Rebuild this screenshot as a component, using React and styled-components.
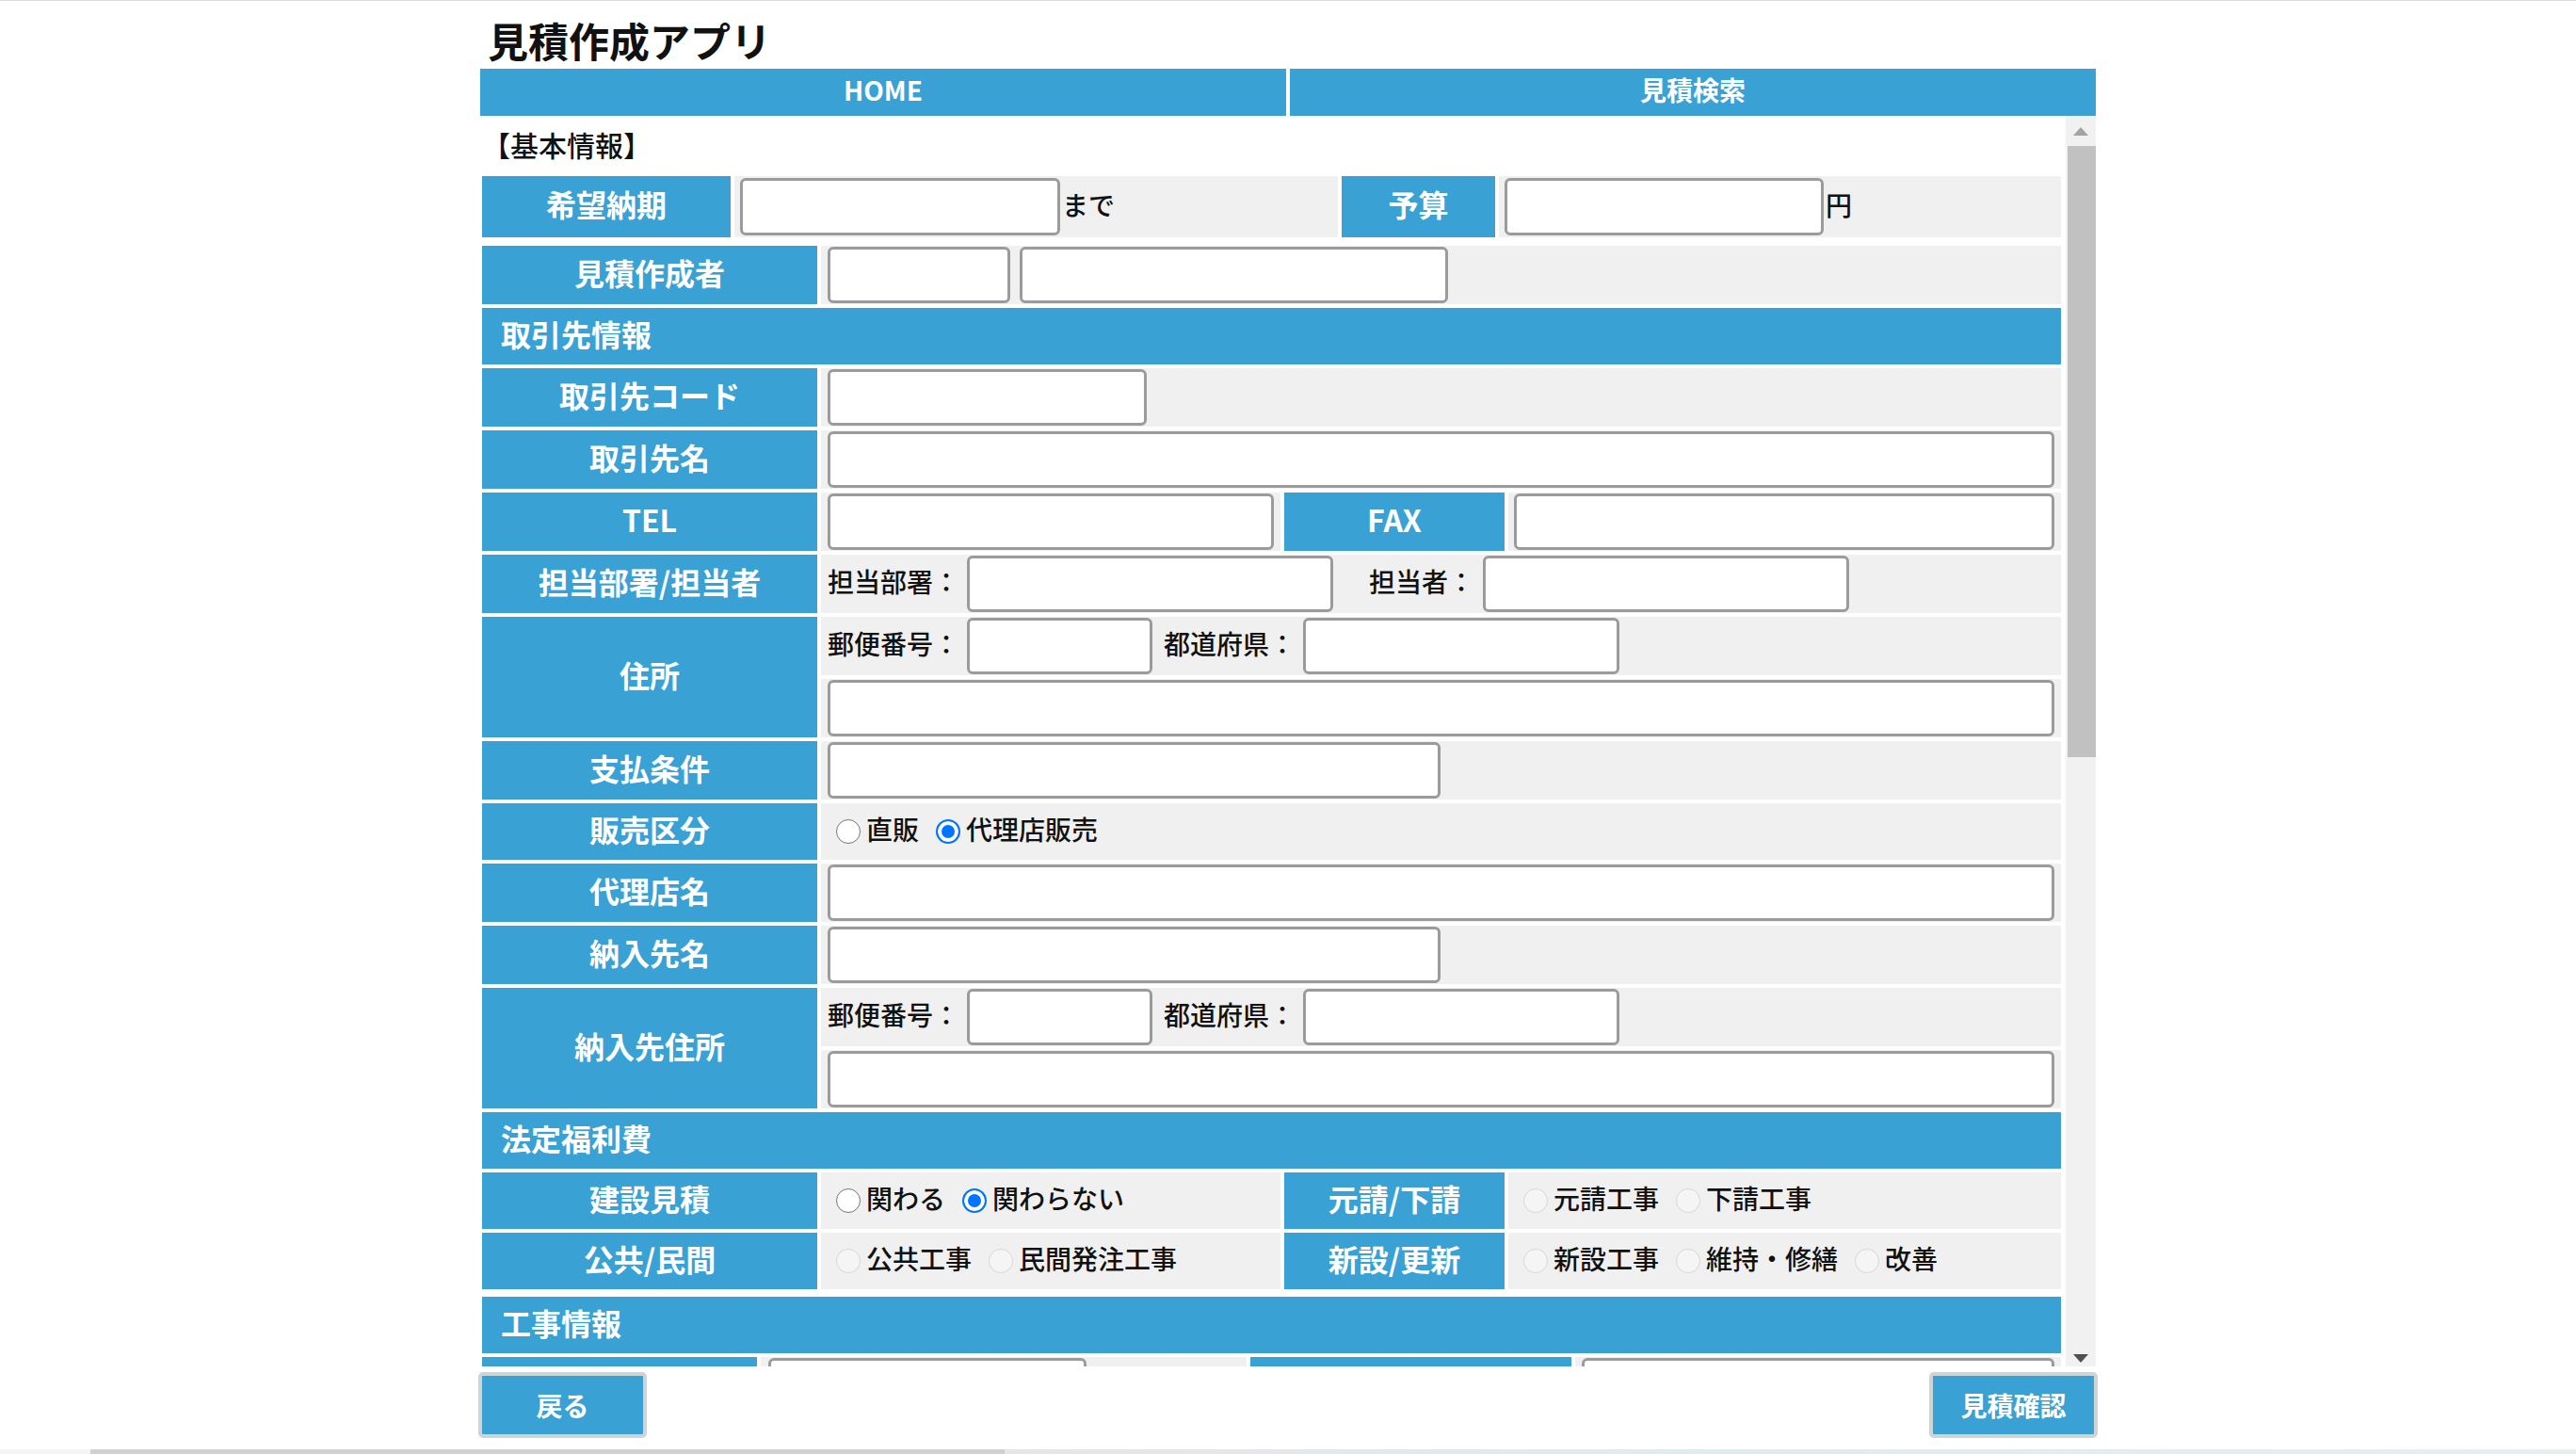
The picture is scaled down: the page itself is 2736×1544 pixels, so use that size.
import React from 'react';
import styled, { createGlobalStyle } from 'styled-components';

const BLUE = '#39a1d4';
const CELL = '#f0f0f0';

const GlobalStyle = createGlobalStyle`
  html, body { margin: 0; padding: 0; background: #fff; }
  body { font-family: "Noto Sans CJK JP", "Noto Sans", sans-serif; color: #111; }
  *, *::before, *::after { box-sizing: border-box; }
`;

const Page = styled.div`
  min-height: 1544px;
  border-top: 1px solid #dcdcdc;
  display: flex;
  flex-direction: column;
`;

const Main = styled.div`
  width: 1716px;
  margin: 0 auto;
  display: flex;
  flex-direction: column;
`;

const AppTitle = styled.h1`
  margin: 0;
  padding: 16px 0 6px 8px;
  font-size: 43px;
  line-height: 50px;
  font-weight: 700;
  color: #111;
`;

const Nav = styled.nav`
  display: grid;
  grid-template-columns: 1fr 1fr;
  gap: 4px;
  height: 50px;
`;

const NavButton = styled.a`
  background: ${BLUE};
  color: #fff;
  font-size: 28px;
  font-weight: 700;
  display: flex;
  align-items: center;
  justify-content: center;
  padding-bottom: 7px;
  text-decoration: none;
`;

const Viewport = styled.div`
  display: flex;
  height: 1328px;
`;

const ScrollContent = styled.div`
  flex: 1 1 0;
  min-width: 0;
  overflow: hidden;
  padding: 0 5px 0 2px;
`;

const ScrollBar = styled.div`
  flex: 0 0 32px;
  background: #f1f1f1;
  display: flex;
  flex-direction: column;
`;

const ScrollButton = styled.div`
  height: 32px;
  display: flex;
  justify-content: center;
  align-items: ${(p) => (p.$end ? 'flex-end' : 'center')};
  padding-bottom: ${(p) => (p.$end ? 4 : 0)}px;
  margin-top: ${(p) => (p.$end ? 'auto' : 0)};
`;

const ScrollThumb = styled.div`
  height: 649px;
  margin-left: 2px;
  background: #c1c1c1;
`;

const Caption = styled.div`
  height: 64px;
  font-size: 30px;
  line-height: 60px;
  font-weight: 500;
`;

const Table = styled.div`
  display: flex;
  flex-direction: column;
  gap: 4px;
  margin-top: ${(p) => p.$mt || 0}px;
`;

const Row = styled.div`
  display: flex;
  gap: 4px;
  height: ${(p) => p.$h || 62}px;
`;

const Label = styled.div`
  flex: 0 0 ${(p) => p.$w}px;
  background: ${BLUE};
  color: #fff;
  font-size: 32px;
  font-weight: 700;
  display: flex;
  align-items: center;
  justify-content: center;
  padding-bottom: 7px;
  white-space: nowrap;
`;

const Cell = styled.div`
  flex: ${(p) => (p.$w ? `0 0 ${p.$w}px` : '1 1 0')};
  min-width: 0;
  background: ${CELL};
  display: flex;
  align-items: center;
  padding: 0 ${(p) => p.$pr ?? 7}px 0 ${(p) => p.$pl ?? 7}px;
`;

const Stack = styled.div`
  flex: 1 1 0;
  display: flex;
  flex-direction: column;
  gap: 4px;
`;

const SectionHead = styled.div`
  height: 60px;
  background: ${BLUE};
  color: #fff;
  font-size: 32px;
  font-weight: 700;
  padding: 0 0 7px 20px;
  display: flex;
  align-items: center;
`;

const Field = styled.input`
  flex: ${(p) => (p.$w ? `0 0 ${p.$w}px` : '1 1 auto')};
  width: ${(p) => (p.$w ? `${p.$w}px` : '100%')};
  height: ${(p) => p.$h || 60}px;
  margin: 0 0 0 ${(p) => p.$ml || 0}px;
  border: 3px solid #9b9b9b;
  border-radius: 6px;
  background: #fff;
  padding: 0 8px;
  font-family: inherit;
  font-size: 28px;
  outline: none;
`;

const Note = styled.span`
  font-size: 28px;
  font-weight: 500;
  white-space: nowrap;
  margin-left: ${(p) => p.$ml || 0}px;
  padding-bottom: 6px;
  color: #111;
`;

const RadioGroup = styled.div`
  display: flex;
  align-items: center;
  gap: 9px;
`;

const Choice = styled.label`
  display: flex;
  align-items: center;
  font-size: 28px;
  font-weight: 500;
  color: #111;
  white-space: nowrap;
`;

const ChoiceText = styled.span`
  padding-bottom: 6px;
`;

const Radio = styled.input.attrs({ type: 'radio' })`
  appearance: none;
  width: 26px;
  height: 26px;
  margin: 0 6px 0 9px;
  border-radius: 50%;
  border: 1.5px solid #767676;
  background: #fff;

  &:checked {
    border: 2px solid #0075ff;
    background: #0075ff;
    box-shadow: inset 0 0 0 4px #fff;
  }
  &:disabled {
    border-color: #d8d8d8;
    background: #f5f5f5;
  }
`;

const Footer = styled.div`
  display: flex;
  justify-content: space-between;
  margin: 6px -2px 12px;
`;

const ActionButton = styled.button`
  width: 179px;
  height: 70px;
  background: ${BLUE};
  border: 4px solid #cdd5d6;
  border-radius: 5px;
  color: #fff;
  font-family: inherit;
  font-size: 28px;
  font-weight: 700;
  padding: 0;
`;

const Dock = styled.div`
  height: 5px;
  background: linear-gradient(
    90deg,
    #f4f4f4 0,
    #f4f4f4 3.5%,
    #d0d0d0 3.5%,
    #d0d0d0 39%,
    #e8e4e8 39%,
    #dcedf0 65%,
    #e6eef0 100%
  );
`;

function Choices({ name, items, checked, disabled }) {
  return (
    <RadioGroup>
      {items.map((it) => (
        <Choice key={it}>
          <Radio name={name} defaultChecked={it === checked} disabled={disabled} />
          <ChoiceText>{it}</ChoiceText>
        </Choice>
      ))}
    </RadioGroup>
  );
}

function AddressRow({ title }) {
  return (
    <Row $h={128}>
      <Label $w={356}>{title}</Label>
      <Stack>
        <Cell>
          <Note>郵便番号：</Note>
          <Field $w={197} $ml={8} />
          <Note $ml={12}>都道府県：</Note>
          <Field $w={336} $ml={8} />
        </Cell>
        <Cell>
          <Field />
        </Cell>
      </Stack>
    </Row>
  );
}

export default function App() {
  return (
    <>
      <GlobalStyle />
      <Page>
        <Main>
          <AppTitle>見積作成アプリ</AppTitle>
          <Nav>
            <NavButton>HOME</NavButton>
            <NavButton>見積検索</NavButton>
          </Nav>

          <Viewport>
            <ScrollContent>
              <Caption>【基本情報】</Caption>

              <Table>
                <Row $h={65}>
                  <Label $w={264}>希望納期</Label>
                  <Cell $w={641} $pl={6}>
                    <Field $w={340} $h={61} />
                    <Note $ml={2}>まで</Note>
                  </Cell>
                  <Label $w={163}>予算</Label>
                  <Cell $pl={6}>
                    <Field $w={339} $h={61} />
                    <Note $ml={2}>円</Note>
                  </Cell>
                </Row>
              </Table>

              <Table $mt={9}>
                <Row>
                  <Label $w={356}>見積作成者</Label>
                  <Cell>
                    <Field $w={194} />
                    <Field $w={455} $ml={10} />
                  </Cell>
                </Row>

                <SectionHead>取引先情報</SectionHead>

                <Row>
                  <Label $w={356}>取引先コード</Label>
                  <Cell>
                    <Field $w={339} />
                  </Cell>
                </Row>
                <Row>
                  <Label $w={356}>取引先名</Label>
                  <Cell>
                    <Field />
                  </Cell>
                </Row>
                <Row>
                  <Label $w={356}>TEL</Label>
                  <Cell $w={488}>
                    <Field />
                  </Cell>
                  <Label $w={234}>FAX</Label>
                  <Cell $pl={6} $pr={7}>
                    <Field />
                  </Cell>
                </Row>
                <Row>
                  <Label $w={356}>担当部署/担当者</Label>
                  <Cell>
                    <Note>担当部署：</Note>
                    <Field $w={389} $ml={8} />
                    <Note $ml={38}>担当者：</Note>
                    <Field $w={389} $ml={9} />
                  </Cell>
                </Row>
                <AddressRow title="住所" />
                <Row>
                  <Label $w={356}>支払条件</Label>
                  <Cell>
                    <Field $w={651} />
                  </Cell>
                </Row>
                <Row $h={60}>
                  <Label $w={356}>販売区分</Label>
                  <Cell>
                    <Choices name="sales" items={['直販', '代理店販売']} checked="代理店販売" />
                  </Cell>
                </Row>
                <Row>
                  <Label $w={356}>代理店名</Label>
                  <Cell>
                    <Field />
                  </Cell>
                </Row>
                <Row>
                  <Label $w={356}>納入先名</Label>
                  <Cell>
                    <Field $w={651} />
                  </Cell>
                </Row>
                <AddressRow title="納入先住所" />

                <SectionHead>法定福利費</SectionHead>

                <Row $h={60}>
                  <Label $w={356}>建設見積</Label>
                  <Cell $w={488}>
                    <Choices name="kensetsu" items={['関わる', '関わらない']} checked="関わらない" />
                  </Cell>
                  <Label $w={234}>元請/下請</Label>
                  <Cell>
                    <Choices name="moto" items={['元請工事', '下請工事']} disabled />
                  </Cell>
                </Row>
                <Row $h={60}>
                  <Label $w={356}>公共/民間</Label>
                  <Cell $w={488}>
                    <Choices name="kokyo" items={['公共工事', '民間発注工事']} disabled />
                  </Cell>
                  <Label $w={234}>新設/更新</Label>
                  <Cell>
                    <Choices name="shinsetsu" items={['新設工事', '維持・修繕', '改善']} disabled />
                  </Cell>
                </Row>
              </Table>

              <Table $mt={8}>
                <SectionHead>工事情報</SectionHead>
                <Row>
                  <Label $w={292} />
                  <Cell $w={516} $pl={8}>
                    <Field $w={338} />
                  </Cell>
                  <Label $w={341} />
                  <Cell>
                    <Field />
                  </Cell>
                </Row>
              </Table>
            </ScrollContent>

            <ScrollBar>
              <ScrollButton>
                <svg width="16" height="9" viewBox="0 0 16 9">
                  <polygon points="8,0 16,9 0,9" fill="#a3a3a3" />
                </svg>
              </ScrollButton>
              <ScrollThumb />
              <ScrollButton $end>
                <svg width="16" height="9" viewBox="0 0 16 9">
                  <polygon points="0,0 16,0 8,9" fill="#505050" />
                </svg>
              </ScrollButton>
            </ScrollBar>
          </Viewport>

          <Footer>
            <ActionButton>戻る</ActionButton>
            <ActionButton>見積確認</ActionButton>
          </Footer>
        </Main>
        <Dock />
      </Page>
    </>
  );
}
